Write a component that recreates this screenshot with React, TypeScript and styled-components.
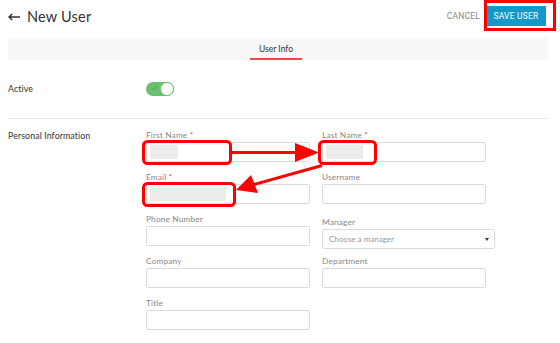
import React from "react";
import styled, { createGlobalStyle } from "styled-components";

const GlobalStyle = createGlobalStyle`
  html, body { margin: 0; padding: 0; background: #ffffff; }
  body { font-family: Lato, "Open Sans", sans-serif; color: #333; }
  * { box-sizing: border-box; }
`;

const Page = styled.div`
  position: relative;
  width: 560px;
  height: 343px;
  padding: 0 12px 0 8px;
  overflow: hidden;
`;

const Header = styled.header`
  display: flex;
  align-items: center;
  justify-content: space-between;
  height: 32px;
`;

const Title = styled.h1`
  display: flex;
  align-items: center;
  gap: 7px;
  margin: 0;
  font-size: 14.5px;
  font-weight: 400;
  color: #333;
  letter-spacing: 0.2px;
`;

const BackIcon = styled.svg`
  display: block;
  margin-top: 1px;
`;

const Actions = styled.div`
  display: flex;
  align-items: center;
  gap: 6px;
  padding-right: 2px;
`;

const CancelButton = styled.button`
  border: none;
  background: none;
  padding: 0;
  font-family: Roboto, sans-serif;
  font-size: 8.5px;
  color: #8a8a8a;
  letter-spacing: 0.2px;
`;

const SaveButton = styled.button`
  border: none;
  width: 60px;
  height: 20px;
  background: #1298c9;
  color: #fff;
  font-family: Roboto, sans-serif;
  font-size: 8.5px;
  font-weight: 400;
  letter-spacing: 0.2px;
  padding: 0;
  margin-top: -1px;
`;

const TabBar = styled.nav`
  margin-top: 6px;
  height: 22px;
  background: #f7f7f7;
  display: flex;
  justify-content: center;
`;

const Tab = styled.div<{ $active?: boolean }>`
  height: 22px;
  padding: 0 9px;
  display: flex;
  align-items: center;
  font-size: 8.5px;
  color: #333;
  border-bottom: 2px solid ${(p) => (p.$active ? "#e84a4a" : "transparent")};
  margin-left: -4px;
  padding-top: 1px;
`;

const Section = styled.section<{ $divider?: boolean }>`
  display: grid;
  grid-template-columns: 138px 1fr;
  border-top: ${(p) => (p.$divider ? "1px solid #e8e8e8" : "none")};
`;

const ActiveSection = styled(Section)`
  padding-top: 23px;
  height: 58px;
`;

const PersonalSection = styled(Section)`
  padding-top: 11px;
`;

const SectionLabel = styled.div`
  font-size: 8.8px;
  color: #333;
  line-height: 12px;
  letter-spacing: 0.1px;
`;

const Toggle = styled.div`
  width: 28px;
  height: 14px;
  border-radius: 7px;
  background: #6abf70;
  position: relative;
  margin-top: -1px;
`;

const Knob = styled.div`
  position: absolute;
  right: 0;
  top: 0;
  width: 14px;
  height: 14px;
  border-radius: 50%;
  background: #fff;
  border: 1.5px solid #6abf70;
`;

const Check = styled.svg`
  position: absolute;
  left: 5px;
  top: 4px;
`;

const Form = styled.div`
  display: grid;
  grid-template-columns: 164px 173px;
  column-gap: 12px;
`;

const Column = styled.div`
  display: flex;
  flex-direction: column;
  gap: 10px;
`;

const Field = styled.div<{ $shift?: number }>`
  display: flex;
  flex-direction: column;
  margin-top: ${(p) => p.$shift ?? 0}px;
  margin-bottom: ${(p) => -(p.$shift ?? 0)}px;
`;

const Label = styled.label`
  font-size: 8.3px;
  color: #888;
  line-height: 12px;
  letter-spacing: 0.15px;
  margin-top: -1px;
  margin-bottom: 1px;
`;

const Required = styled.span`
  color: #e84a4a;
`;

const InputBox = styled.div<{ $wide?: boolean }>`
  width: ${(p) => (p.$wide ? "173px" : "164px")};
  height: 20px;
  border: 1px solid #dcdcdc;
  border-radius: 2px;
  background: #fff;
  display: flex;
  align-items: center;
  padding: 0 3px;
`;

const Redacted = styled.span<{ $w: number }>`
  display: block;
  width: ${(p) => p.$w}px;
  height: 14px;
  background: #ececec;
`;

const SelectBox = styled(InputBox)`
  justify-content: space-between;
  padding: 0 5px 0 6px;
  font-size: 8px;
  color: #999;
`;

const Caret = styled.span`
  width: 0;
  height: 0;
  border-left: 2.5px solid transparent;
  border-right: 2.5px solid transparent;
  border-top: 3px solid #333;
`;

const Overlay = styled.svg`
  position: absolute;
  left: 0;
  top: 0;
  pointer-events: none;
`;

type F = { label: string; req?: boolean; redact?: number; shift?: number };

const FieldItem = ({ label, req, redact, shift }: F) => (
  <Field $shift={shift}>
    <Label>
      {label}
      {req && <Required> *</Required>}
    </Label>
    <InputBox>{redact ? <Redacted $w={redact} /> : null}</InputBox>
  </Field>
);

export default function App() {
  return (
    <>
      <GlobalStyle />
      <Page>
        <Header>
          <Title>
            <BackIcon width="12" height="8" viewBox="0 0 12 8">
              <path d="M12 4 H1.5 M4.2 1 L1 4 L4.2 7" fill="none" stroke="#333" strokeWidth="1.4" />
            </BackIcon>
            New User
          </Title>
          <Actions>
            <CancelButton>CANCEL</CancelButton>
            <SaveButton>SAVE USER</SaveButton>
          </Actions>
        </Header>
        <TabBar>
          <Tab $active>User Info</Tab>
        </TabBar>
        <ActiveSection>
          <SectionLabel>Active</SectionLabel>
          <div>
            <Toggle>
              <Check width="6" height="5" viewBox="0 0 6 5">
                <path d="M0.5 2.5 L2.2 4 L5.5 0.8" fill="none" stroke="#4e9a54" strokeWidth="0.9" />
              </Check>
              <Knob />
            </Toggle>
          </div>
        </ActiveSection>
        <PersonalSection $divider>
          <SectionLabel>Personal Information</SectionLabel>
          <Form>
            <Column>
              <FieldItem label="First Name" req redact={28} />
              <FieldItem label="Email" req redact={76} />
              <FieldItem label="Phone Number" />
              <FieldItem label="Company" />
              <FieldItem label="Title" />
            </Column>
            <Column>
              <FieldItem label="Last Name" req redact={37} />
              <FieldItem label="Username" />
              <Field $shift={3}>
                <Label>Manager</Label>
                <SelectBox $wide>
                  Choose a manager
                  <Caret />
                </SelectBox>
              </Field>
              <FieldItem label="Department" />
            </Column>
          </Form>
        </PersonalSection>
        <Overlay width="560" height="343" viewBox="0 0 560 343">
          <g fill="none" stroke="#ff0000" strokeWidth="3">
            <rect x="485.5" y="1.5" width="69" height="28" />
            <rect x="143.5" y="141.5" width="87" height="22" rx="4" />
            <rect x="319.5" y="141.5" width="56" height="22" rx="4" />
            <rect x="143.5" y="183.5" width="91" height="22" rx="4" />
            <line x1="232" y1="152.5" x2="300" y2="152.5" />
            <line x1="322" y1="165.5" x2="252" y2="185" />
          </g>
          <g fill="#ff0000">
            <polygon points="295,143 319,152.5 295,162" />
            <polygon points="236,190 251,175 258,193" />
          </g>
        </Overlay>
      </Page>
    </>
  );
}
